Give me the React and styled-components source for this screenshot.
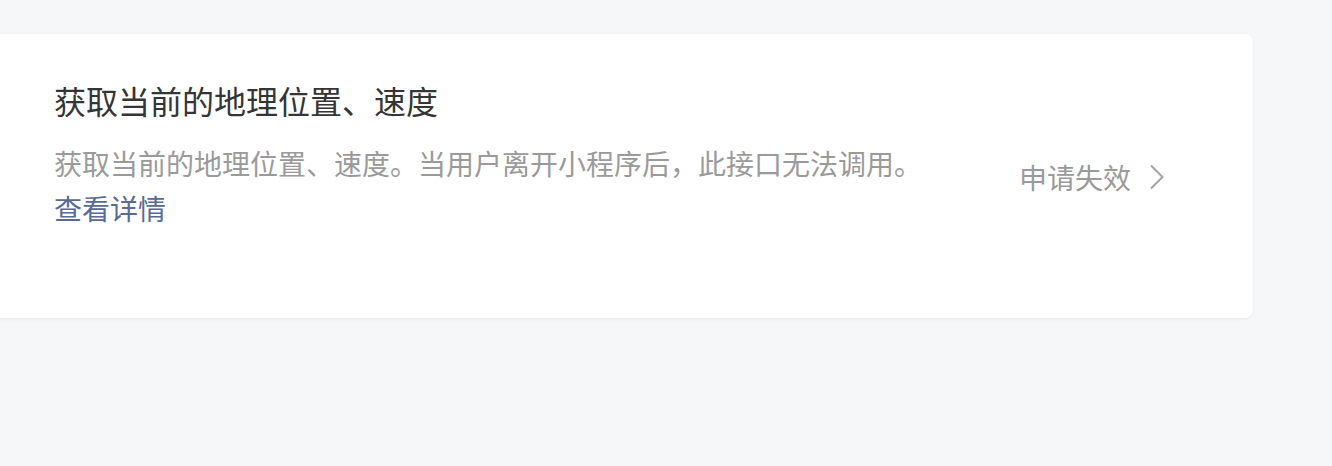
import React from 'react';
import styled, { createGlobalStyle } from 'styled-components';

const Global = createGlobalStyle`
  html, body {
    margin: 0;
    padding: 0;
    background: #f6f7f9;
    font-family: "Noto Sans CJK SC", "Noto Sans", sans-serif;
  }
`;

const Page = styled.div`
  width: 1332px;
  height: 466px;
  padding-top: 34px;
  box-sizing: border-box;
  overflow: hidden;
`;

const Card = styled.div`
  display: flex;
  align-items: center;
  justify-content: space-between;
  width: 1273px;
  height: 284px;
  margin-left: -20px;
  box-sizing: border-box;
  padding: 0 88px 0 74px;
  background: #fff;
  border-radius: 8px;
  box-shadow: 0 1px 3px rgba(0, 0, 0, 0.06);
`;

const Info = styled.div`
  display: flex;
  flex-direction: column;
  align-self: flex-start;
  padding-top: 44px;
`;

const Title = styled.div`
  font-size: 32px;
  line-height: 45px;
  color: #353535;
  margin-bottom: 18px;
`;

const Desc = styled.div`
  font-size: 28px;
  line-height: 45px;
  color: #9a9a9a;
`;

const Link = styled.a`
  font-size: 28px;
  line-height: 45px;
  color: #576b95;
  text-decoration: none;
  cursor: pointer;
`;

const Status = styled.div`
  display: flex;
  align-items: center;
  gap: 18px;
  font-size: 28px;
  color: #9a9a9a;
  margin-top: 2px;
`;

const Chevron = () => (
  <svg width="16" height="26" viewBox="0 0 16 26" fill="none">
    <path d="M2 1.5 L13.5 13 L2 24.5" stroke="#a3a3a3" strokeWidth="2" />
  </svg>
);

export default function App() {
  return (
    <>
      <Global />
      <Page>
        <Card>
          <Info>
            <Title>获取当前的地理位置、速度</Title>
            <Desc>获取当前的地理位置、速度。当用户离开小程序后，此接口无法调用。</Desc>
            <Link>查看详情</Link>
          </Info>
          <Status>
            申请失效
            <Chevron />
          </Status>
        </Card>
      </Page>
    </>
  );
}
